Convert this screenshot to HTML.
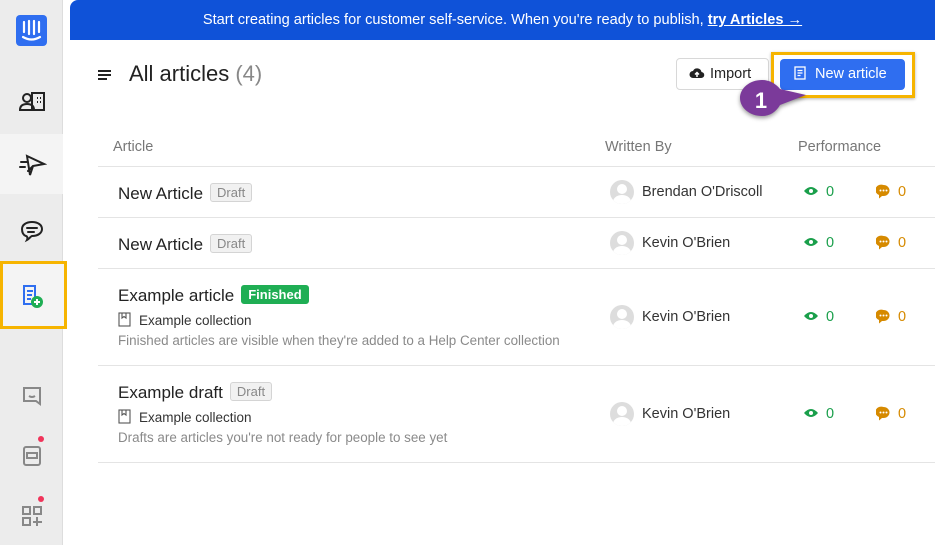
<!DOCTYPE html>
<html><head><meta charset="utf-8"><style>
*{box-sizing:border-box;margin:0;padding:0}
body{width:935px;height:545px;overflow:hidden;background:#fff;font-family:"Liberation Sans",sans-serif;position:relative;color:#222}
.side{position:absolute;left:0;top:0;width:63px;height:545px;background:#ececec;border-right:1px solid #ddd}
.ic{position:absolute;left:0;width:63px;display:flex;justify-content:center;align-items:center}
.banner{position:absolute;left:70px;top:0;width:865px;height:40px;background:#0f52d8;border-top-left-radius:8px;color:#fff;font-size:14.6px;text-align:center;line-height:40px}
.banner u{font-weight:bold}
.a{position:absolute;white-space:nowrap}
.line{position:absolute;left:98px;width:837px;height:1px;background:#e4e4e4}
.title{font-size:17px;color:#222}
.tag{display:inline-block;font-size:13px;border:1px solid #d4d4d4;background:#f1f1f1;color:#888;border-radius:3px;padding:1px 6px;margin-left:7px;vertical-align:2px}
.fin{background:#1fae54;border-color:#1fae54;color:#fff;font-weight:bold}
.av{position:absolute;width:24px;height:24px;border-radius:50%;background:#ddd;overflow:hidden}
.av:before{content:"";position:absolute;left:7px;top:4px;width:10px;height:10px;border-radius:50%;background:#fff}
.av:after{content:"";position:absolute;left:3px;top:15px;width:18px;height:14px;border-radius:50%;background:#fff}
.name{font-size:14.5px;color:#333}
.g{color:#1a9f4b;font-size:14.5px}
.o{color:#d68a00;font-size:14.5px}
.sub{font-size:13.5px;color:#333}
.desc{font-size:13.4px;color:#8a8a8a}
</style></head><body>
<div class="side">
  <div class="ic" style="top:15px"><div style="width:31px;height:31px;background:#2f6ef0;border-radius:4px;position:relative">
    <svg width="31" height="31" viewBox="0 0 31 31" fill="none" stroke="#fff" stroke-width="2.2" stroke-linecap="round"><path d="M8 7v10M13 6v13M18 6v13M23 7v10M7 22q8.5 5 17 0"/></svg></div></div>
  <div class="ic" style="top:90px"><svg width="28" height="24" viewBox="0 0 28 24" fill="none" stroke="#222" stroke-width="2"><circle cx="9" cy="8" r="4"/><path d="M2 20q0-6 7-6t7 6z"/><rect x="14" y="3" width="12" height="17"/><path d="M19 8h1M22 8h1M19 12h1M22 12h1"/></svg></div>
  <div style="position:absolute;left:0;top:134px;width:63px;height:60px;background:#f4f4f4"></div>
  <div class="ic" style="top:152px"><svg width="30" height="24" viewBox="0 0 30 24" fill="none" stroke="#222" stroke-width="2" stroke-linecap="round"><path d="M10 4l17 8-11 2-3 9zM16 14l-5 5M4 10h6M3 15h5"/></svg></div>
  <div class="ic" style="top:218px"><svg width="26" height="26" viewBox="0 0 26 26" fill="none" stroke="#222" stroke-width="2" stroke-linecap="round"><path d="M13 4c6 0 10 3 10 7s-4 7-10 7c-1 0-3 3-5 4 1-2 0-4-1-4C4 17 3 14 3 11c0-4 4-7 10-7zM8 10h10M9 14h6"/></svg></div>
  <div style="position:absolute;left:0;top:261px;width:67px;height:68px;border:3px solid #f6b400;background:#f4f4f4"></div>
  <div class="ic" style="top:283px"><svg width="24" height="26" viewBox="0 0 24 26" fill="none"><path d="M4 3h11v18H4z" stroke="#2f6ef0" stroke-width="2"/><path d="M7 8h6M7 12h5M7 16h4" stroke="#2f6ef0" stroke-width="2"/><circle cx="17" cy="19" r="6" fill="#1fae54"/><path d="M17 16v6M14 19h6" stroke="#fff" stroke-width="2"/></svg></div>
  <div class="ic" style="top:385px"><svg width="22" height="22" viewBox="0 0 22 22" fill="none" stroke="#888" stroke-width="2"><path d="M3 3h16v16l-4-3H3zM8 11q3 2 6 0"/></svg></div>
  <div style="position:absolute;left:38px;top:436px;width:6px;height:6px;border-radius:50%;background:#f0345a"></div>
  <div class="ic" style="top:445px"><svg width="20" height="22" viewBox="0 0 20 22" fill="none" stroke="#888" stroke-width="2"><rect x="2" y="2" width="16" height="18" rx="2"/><rect x="5" y="8" width="10" height="5"/></svg></div>
  <div style="position:absolute;left:38px;top:496px;width:6px;height:6px;border-radius:50%;background:#f0345a"></div>
  <div class="ic" style="top:505px"><svg width="22" height="22" viewBox="0 0 22 22" fill="none" stroke="#888" stroke-width="2"><rect x="2" y="2" width="7" height="7"/><rect x="13" y="2" width="7" height="7"/><rect x="2" y="13" width="7" height="7"/><path d="M16 12v9M12 17h9"/></svg></div>
</div>
<div class="banner">Start creating articles for customer self-service. When you're ready to publish, <u>try Articles →</u></div>
<div class="a" style="left:98px;top:68px"><svg width="14" height="14" viewBox="0 0 14 14" stroke="#222" stroke-width="2"><path d="M0 3h13M0 7h13M0 11h9"/></svg></div>
<div class="a" style="left:129px;top:61px;font-size:22px;color:#222">All articles <span style="color:#888">(4)</span></div>
<div class="a" style="left:676px;top:58px;width:93px;height:32px;border:1px solid #d8d8d8;border-radius:4px;font-size:14.5px;line-height:30px;padding-left:12px"><svg width="16" height="12" viewBox="0 0 16 12" style="vertical-align:-1px;margin-right:5px"><path d="M4 11a3.5 3.5 0 010-7 4.5 4.5 0 018.5 1A3 3 0 0112 11z" fill="#222"/><path d="M8 10V6M6 7.5l2-2 2 2" stroke="#fff" stroke-width="1.5" fill="none"/></svg>Import</div>
<div class="a" style="left:771px;top:52px;width:144px;height:46px;border:3px solid #f6b400;box-shadow:0 1px 3px rgba(0,0,0,.3)"></div>
<div class="a" style="left:780px;top:59px;width:125px;height:31px;background:#2f6ef0;border-radius:4px;color:#fff;font-size:14.5px;line-height:31px;padding-left:14px"><svg width="12" height="14" viewBox="0 0 12 14" fill="none" stroke="#fff" stroke-width="1.3" style="vertical-align:-2px;margin-right:9px"><rect x="1" y="1" width="10" height="12"/><path d="M3.5 4.5h5M3.5 7h5M3.5 9.5h3"/></svg>New article</div>
<svg class="a" style="left:734px;top:76px" width="76" height="50" viewBox="0 0 76 50"><path d="M28 4c8 0 14 4 18 9l26 6-26 10c-4 7-10 11-18 11C16 40 6 32 6 22S16 4 28 4z" fill="#7b3a9a" filter="drop-shadow(0 2px 2px rgba(0,0,0,.4))"/><text x="27" y="32" fill="#fff" font-size="22" font-weight="bold" text-anchor="middle" font-family="Liberation Sans">1</text></svg>
<div class="a" style="left:113px;top:139px;font-size:14.5px;color:#777">Article</div>
<div class="a" style="left:605px;top:139px;font-size:14.5px;color:#777">Written By</div>
<div class="a" style="left:798px;top:139px;font-size:14.5px;color:#777">Performance</div>
<div class="line" style="top:166px"></div>
<div class="line" style="top:217px"></div>
<div class="line" style="top:268px"></div>
<div class="line" style="top:365px"></div>
<div class="line" style="top:462px"></div>

<div class="a title" style="left:118px;top:183px">New Article<span class="tag">Draft</span></div>
<div class="a title" style="left:118px;top:234px">New Article<span class="tag">Draft</span></div>
<div class="a title" style="left:118px;top:285px">Example article<span class="tag fin">Finished</span></div>
<div class="a sub" style="left:118px;top:312px"><svg width="14" height="15" viewBox="0 0 14 15" fill="none" stroke="#555" stroke-width="1.1" style="vertical-align:-2px;margin-right:7px"><rect x="1" y="1" width="11" height="13"/><path d="M4 1v5l2-1.5L8 6V1"/></svg>Example collection</div>
<div class="a desc" style="left:118px;top:333px">Finished articles are visible when they're added to a Help Center collection</div>
<div class="a title" style="left:118px;top:382px">Example draft<span class="tag">Draft</span></div>
<div class="a sub" style="left:118px;top:409px"><svg width="14" height="15" viewBox="0 0 14 15" fill="none" stroke="#555" stroke-width="1.1" style="vertical-align:-2px;margin-right:7px"><rect x="1" y="1" width="11" height="13"/><path d="M4 1v5l2-1.5L8 6V1"/></svg>Example collection</div>
<div class="a desc" style="left:118px;top:430px">Drafts are articles you're not ready for people to see yet</div>

<div class="av" style="left:610px;top:180px"></div><div class="a name" style="left:642px;top:184px">Brendan O'Driscoll</div>
<div class="av" style="left:610px;top:231px"></div><div class="a name" style="left:642px;top:235px">Kevin O'Brien</div>
<div class="av" style="left:610px;top:305px"></div><div class="a name" style="left:642px;top:309px">Kevin O'Brien</div>
<div class="av" style="left:610px;top:402px"></div><div class="a name" style="left:642px;top:406px">Kevin O'Brien</div>

<script>
[192,243,317,414].forEach(function(y){
document.write('<div class="a g" style="left:803px;top:'+(y-8)+'px"><svg width="16" height="10" viewBox="0 0 16 10" style="vertical-align:0;margin-right:7px"><path d="M1 5q7-8 14 0-7 8-14 0z" fill="#1a9f4b"/><circle cx="8" cy="5" r="2" fill="#fff"/></svg>0</div>');
document.write('<div class="a o" style="left:876px;top:'+(y-8)+'px"><svg width="15" height="15" viewBox="0 0 15 15" style="vertical-align:-3px;margin-right:7px"><path d="M7.5 1a6 5.5 0 110 11H6l-3 2.5V11A5.5 5 0 017.5 1z" fill="#d68a00"/><circle cx="4.5" cy="6.5" r="1" fill="#fff"/><circle cx="7.5" cy="6.5" r="1" fill="#fff"/><circle cx="10.5" cy="6.5" r="1" fill="#fff"/></svg>0</div>');
});
</script>
</body></html>
